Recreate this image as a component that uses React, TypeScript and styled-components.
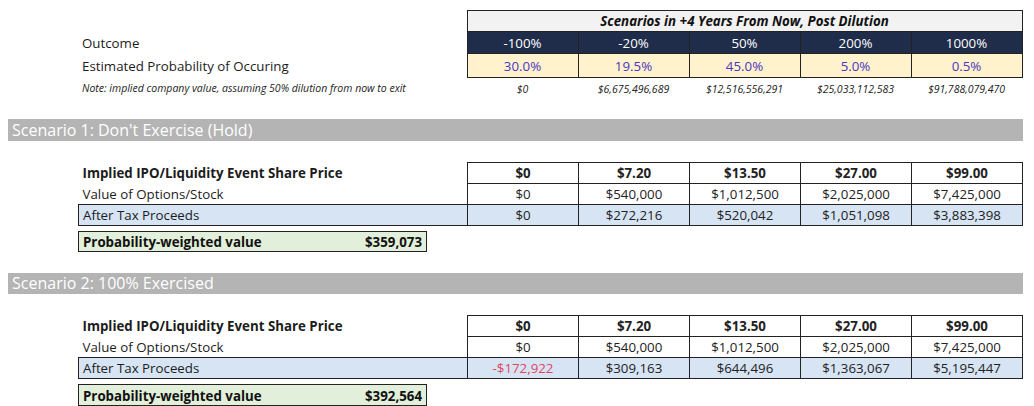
import styled, { createGlobalStyle } from "styled-components";

const GlobalStyle = createGlobalStyle`
  body {
    margin: 0;
    background: #ffffff;
    font-family: "Open Sans", "DejaVu Sans", sans-serif;
    color: #1c1c1c;
  }
`;

const Page = styled.div`
  width: 1034px;
  height: 406px;
  padding-top: 10px;
  box-sizing: border-box;
  display: flex;
  flex-direction: column;
  overflow: hidden;
`;

const Sheet = styled.table<{ $mt?: number }>`
  margin-left: 78px;
  margin-top: ${({ $mt }) => $mt ?? 0}px;
  width: 944px;
  border-collapse: collapse;
  table-layout: fixed;
`;

const Row = styled.tr<{ $h: number }>`
  height: ${({ $h }) => $h}px;
`;

const Label = styled.td<{ $bold?: boolean; $note?: boolean; $boxed?: boolean }>`
  padding: ${({ $note }) => ($note ? "0 4px" : "2px 4px 0")};
  text-align: left;
  white-space: nowrap;
  font-size: ${({ $note }) => ($note ? "10.5px" : "13.3px")};
  font-style: ${({ $note }) => ($note ? "italic" : "normal")};
  font-weight: ${({ $bold }) => ($bold ? 700 : 400)};
  line-height: 1;
  vertical-align: middle;
  ${({ $boxed }) =>
    $boxed &&
    `
    background: #d6e4f4;
    border: 1px solid #222;
  `}
`;

type Tone = "head" | "navy" | "yellow" | "note" | "plain" | "blue";

const toneBg: Record<Tone, string> = {
  head: "#f2f2f2",
  navy: "#1f2c4a",
  yellow: "#fff2cc",
  note: "transparent",
  plain: "#ffffff",
  blue: "#d6e4f4",
};

const toneColor: Record<Tone, string> = {
  head: "#111",
  navy: "#ffffff",
  yellow: "#4a35c4",
  note: "#222",
  plain: "#222",
  blue: "#222",
};

const Cell = styled.td<{ $tone: Tone; $bold?: boolean; $red?: boolean }>`
  padding: ${({ $tone }) => ($tone === "note" ? "0" : "2px 0 0")};
  text-align: center;
  white-space: nowrap;
  line-height: 1;
  vertical-align: middle;
  background: ${({ $tone }) => toneBg[$tone]};
  color: ${({ $tone, $red }) => ($red ? "#e0475f" : toneColor[$tone])};
  border: ${({ $tone }) => ($tone === "note" ? "none" : "1px solid #222")};
  font-size: ${({ $tone }) => ($tone === "note" ? "10.5px" : "13.3px")};
  font-style: ${({ $tone }) => ($tone === "note" ? "italic" : "normal")};
  font-weight: ${({ $bold }) => ($bold ? 700 : 400)};
`;

const Title = styled.td`
  padding: 1px 0 0;
  text-align: center;
  background: #f2f2f2;
  border: 1px solid #222;
  font-size: 13.3px;
  font-weight: 700;
  font-style: italic;
  color: #111;
  line-height: 1;
  vertical-align: middle;
`;

const ScenarioBar = styled.div<{ $mt: number; $h: number }>`
  margin-left: 8px;
  margin-top: ${({ $mt }) => $mt}px;
  width: 1015px;
  height: ${({ $h }) => $h}px;
  background: #b4b4b4;
  color: #ffffff;
  font-size: 16px;
  line-height: ${({ $h }) => $h}px;
  padding-left: 4px;
  box-sizing: border-box;
  white-space: nowrap;
`;

const WeightedBox = styled.div<{ $h: number }>`
  margin-left: 78px;
  margin-top: 5px;
  width: 349px;
  height: ${({ $h }) => $h}px;
  box-sizing: border-box;
  border: 1px solid #222;
  background: #e2efda;
  display: flex;
  align-items: center;
  justify-content: space-between;
  padding: 2px 4px 0;
  font-size: 13.3px;
  font-weight: 700;
  color: #111;
`;

const outcomes = ["-100%", "-20%", "50%", "200%", "1000%"];
const probabilities = ["30.0%", "19.5%", "45.0%", "5.0%", "0.5%"];
const companyValues = [
  "$0",
  "$6,675,496,689",
  "$12,516,556,291",
  "$25,033,112,583",
  "$91,788,079,470",
];
const sharePrices = ["$0", "$7.20", "$13.50", "$27.00", "$99.00"];
const optionValues = ["$0", "$540,000", "$1,012,500", "$2,025,000", "$7,425,000"];

interface Scenario {
  title: string;
  proceeds: string[];
  weighted: string;
}

const scenarios: Scenario[] = [
  {
    title: "Scenario 1: Don't Exercise (Hold)",
    proceeds: ["$0", "$272,216", "$520,042", "$1,051,098", "$3,883,398"],
    weighted: "$359,073",
  },
  {
    title: "Scenario 2: 100% Exercised",
    proceeds: ["-$172,922", "$309,163", "$644,496", "$1,363,067", "$5,195,447"],
    weighted: "$392,564",
  },
];

const Cols = () => (
  <colgroup>
    <col style={{ width: 389 }} />
    {outcomes.map((o) => (
      <col key={o} style={{ width: 111 }} />
    ))}
  </colgroup>
);

const ScenarioBlock = ({ scenario, first }: { scenario: Scenario; first: boolean }) => (
  <>
    <ScenarioBar $mt={first ? 19 : 21} $h={first ? 22 : 21}>
      {scenario.title}
    </ScenarioBar>
    <Sheet $mt={21}>
      <Cols />
      <tbody>
        <Row $h={21}>
          <Label $bold>Implied IPO/Liquidity Event Share Price</Label>
          {sharePrices.map((v, i) => (
            <Cell key={i} $tone="plain" $bold>
              {v}
            </Cell>
          ))}
        </Row>
        <Row $h={21}>
          <Label>Value of Options/Stock</Label>
          {optionValues.map((v, i) => (
            <Cell key={i} $tone="plain">
              {v}
            </Cell>
          ))}
        </Row>
        <Row $h={21}>
          <Label $boxed>After Tax Proceeds</Label>
          {scenario.proceeds.map((v, i) => (
            <Cell key={i} $tone="blue" $red={v.startsWith("-")}>
              {v}
            </Cell>
          ))}
        </Row>
      </tbody>
    </Sheet>
    <WeightedBox $h={first ? 21 : 22}>
      <span>Probability-weighted value</span>
      <span>{scenario.weighted}</span>
    </WeightedBox>
  </>
);

export default function App() {
  return (
    <Page>
      <GlobalStyle />
      <Sheet>
        <Cols />
        <tbody>
          <Row $h={21}>
            <Label />
            <Title colSpan={5}>Scenarios in +4 Years From Now, Post Dilution</Title>
          </Row>
          <Row $h={22}>
            <Label>Outcome</Label>
            {outcomes.map((v) => (
              <Cell key={v} $tone="navy">
                {v}
              </Cell>
            ))}
          </Row>
          <Row $h={24}>
            <Label>Estimated Probability of Occuring</Label>
            {probabilities.map((v) => (
              <Cell key={v} $tone="yellow">
                {v}
              </Cell>
            ))}
          </Row>
          <Row $h={22}>
            <Label $note>Note: implied company value, assuming 50% dilution from now to exit</Label>
            {companyValues.map((v) => (
              <Cell key={v} $tone="note">
                {v}
              </Cell>
            ))}
          </Row>
        </tbody>
      </Sheet>
      {scenarios.map((s, i) => (
        <ScenarioBlock key={s.title} scenario={s} first={i === 0} />
      ))}
    </Page>
  );
}
